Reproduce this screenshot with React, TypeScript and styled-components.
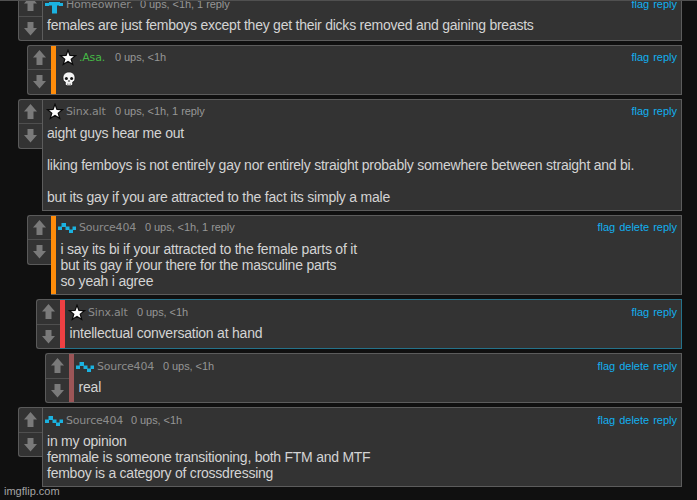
import React from 'react';
import styled, { createGlobalStyle } from 'styled-components';

const Global = createGlobalStyle`
  html, body { margin: 0; background: #101010; overflow: hidden; }
  * { box-sizing: border-box; }
`;

const Page = styled.main`
  position: relative;
  width: 697px;
  height: 500px;
  overflow: hidden;
  background: #101010;
  font-family: "Liberation Sans", Arial, sans-serif;
`;

const TopEdge = styled.div`
  position: absolute;
  top: 0;
  left: 0;
  right: 0;
  height: 1px;
  background: #505050;
`;

const Thread = styled.div`
  display: flex;
  flex-direction: column;
  gap: 4px;
  margin-top: -9px;
  padding: 0 15px 0 18px;
`;

const CommentRow = styled.article<{ $depth: number }>`
  display: flex;
  align-items: flex-start;
  flex: none;
  margin-left: ${p => p.$depth * 9}px;
`;

const VoteBox = styled.div`
  display: flex;
  flex-direction: column;
  flex: none;
  width: 24px;
  height: 50px;
  background: #333;
  border: 1px solid #5a5a5a;
  border-right: 0;
  border-radius: 3px 0 0 3px;
`;

const VoteButton = styled.div<{ $low?: boolean }>`
  display: flex;
  justify-content: center;
  height: ${p => (p.$low ? 24 : 23)}px;
  padding-top: 4px;
  svg { display: block; }
  & + & {
    flex: 1;
    height: auto;
    padding-top: 5px;
    border-top: 1px solid #4f4f4f;
  }
`;

const Card = styled.div<{ $accent?: string; $active?: boolean }>`
  flex: 1;
  min-height: 50px;
  padding: 0 4px 5px 4px;
  background: #333;
  border: 1px solid ${p => (p.$active ? '#25728a' : '#5c5c5c')};
  border-left: ${p => (p.$accent ? '0' : '1px solid #5c5c5c')};
  ${p => p.$accent && `box-shadow: inset 5px 0 ${p.$accent}; padding-left: 9px;`}
`;

const Header = styled.header<{ $low?: boolean }>`
  display: flex;
  align-items: center;
  height: ${p => (p.$low ? 25 : 23)}px;
  margin: 0 0 ${p => (p.$low ? 0 : 2)}px -2px;
`;

const Avatar = styled.span`
  display: block;
  flex: none;
  width: 21px;
  height: 17px;
  svg { display: block; }
`;

const Name = styled.span<{ $green?: boolean; $w: number }>`
  width: ${p => p.$w}px;
  flex: none;
  font: 11px/15px "DejaVu Sans", Verdana, sans-serif;
  letter-spacing: -0.2px;
  color: ${p => (p.$green ? '#45b845' : '#8c8c8c')};
  white-space: nowrap;
`;

const Meta = styled.span`
  margin-left: 9px;
  font-size: 11px;
  line-height: 15px;
  letter-spacing: -0.06px;
  color: #969696;
  white-space: nowrap;
`;

const Links = styled.nav`
  display: flex;
  gap: 4px;
  margin-left: auto;
  font-size: 11px;
  line-height: 15px;
  color: #12b0f0;
`;

const Body = styled.div<{ $inset?: boolean }>`
  padding-left: ${p => (p.$inset ? 0.5 : 0)}px;
  font-size: 14px;
  line-height: 16px;
  color: #d4d4d4;
  white-space: pre;
`;

const Line = styled.div<{ $ls: number }>`
  height: 16px;
  letter-spacing: ${p => p.$ls}px;
`;

const Watermark = styled.div`
  position: absolute;
  left: 4px;
  top: 485px;
  font-size: 11px;
  line-height: 13px;
  color: #a4a4a4;
`;

const Arrow = ({ down }: { down?: boolean }) => (
  <svg width="13" height="15" viewBox="0 0 13 15">
    <path fill="#7a7a7a" d={down ? 'M3.500 0h6v6H13l-6.500 7.500L0 6h3.500z' : 'M6.500 0L13 7.500H9.500V15h-6V7.500H0z'} />
  </svg>
);

type IconKind = 'star' | 'wave' | 'tee';

const UserIcon = ({ kind }: { kind: IconKind }) => (
  <svg width="19" height="18" viewBox="0 0 19 18">
    {kind === 'star' && (
      <path
        d="M10 3l1.500 4.100 4.400.1-3.400 2.700 1.200 4.200L10 11.700l-3.700 2.400 1.200-4.200-3.400-2.700 4.400-.1z"
        fill="#fff" stroke="#0a0a0a" strokeWidth="2.400" paintOrder="stroke"
      />
    )}
    {kind === 'wave' && (
      <path fill="#1bb2e0" d="M0 7.500h4V11H0zM3.500 4h4.500v4H3.500zM7.500 7.500h4V11h-4zM11 10.500h4V14h-4zM14.500 7.500h3.500V11h-3.500z" />
    )}
    {kind === 'tee' && (
      <path fill="#1bb2e0" d="M0 7h4v3H0zM4 6h11v3.500H4zM7 6h5v11.500H7zM14 7h4v3h-4z" />
    )}
  </svg>
);

interface CommentData {
  depth: number;
  accent?: string;
  active?: boolean;
  low?: boolean;
  icon: IconKind;
  name: string;
  nameWidth: number;
  green?: boolean;
  meta: string;
  own?: boolean;
  lines: [string, number][];
  skull?: boolean;
}

const comments: CommentData[] = [
  { depth: 0, low: true, icon: 'tee', name: 'Homeowner.', nameWidth: 65, meta: '0 ups, <1h, 1 reply',
    lines: [['females are just femboys except they get their dicks removed and gaining breasts', -0.24]] },
  { depth: 1, accent: '#ff8c0a', icon: 'star', name: '.Asa.', nameWidth: 27, green: true, meta: '0 ups, <1h', lines: [], skull: true },
  { depth: 0, icon: 'star', name: 'Sinx.alt', nameWidth: 40, meta: '0 ups, <1h, 1 reply',
    lines: [['aight guys hear me out', -0.25], ['', 0],
      ['liking femboys is not entirely gay nor entirely straight probably somewhere between straight and bi.', -0.238], ['', 0],
      ['but its gay if you are attracted to the fact its simply a male', -0.215]] },
  { depth: 1, accent: '#ff8c0a', icon: 'wave', name: 'Source404', nameWidth: 57, meta: '0 ups, <1h, 1 reply', own: true,
    lines: [['i say its bi if your attracted to the female parts of it', -0.21],
      ['but its gay if your there for the masculine parts', -0.23], ['so yeah i agree', -0.2]] },
  { depth: 2, accent: '#ee4043', active: true, low: true, icon: 'star', name: 'Sinx.alt', nameWidth: 40, meta: '0 ups, <1h',
    lines: [['intellectual conversation at hand', -0.22]] },
  { depth: 3, accent: '#9b5557', low: true, icon: 'wave', name: 'Source404', nameWidth: 57, meta: '0 ups, <1h', own: true, lines: [['real', -0.2]] },
  { depth: 0, low: true, icon: 'wave', name: 'Source404', nameWidth: 56, meta: '0 ups, <1h', own: true,
    lines: [['in my opinion', -0.23], ['femmale is someone transitioning, both FTM and MTF', -0.255], ['femboy is a category of crossdressing', -0.24]] },
];

const SkullSvg = styled.svg`
  display: block;
  margin: 0 0 0 1px;
`;

const Skull = () => (
  <SkullSvg width="14" height="16" viewBox="0 0 14 16">
    <path d="M7 1C3.200 1 1 3.600 1 6.800c0 2.200.6 3.600 2.300 4.200v2.300c0 .9 1.300 1.500 3.700 1.500s3.700-.6 3.700-1.500V11C12.400 10.400 13 9 13 6.800 13 3.600 10.800 1 7 1z" fill="#f4f4f4" stroke="#161616" strokeWidth=".7" />
    <circle cx="4.400" cy="7.500" r="1.500" fill="#151515" />
    <circle cx="9.600" cy="7.500" r="1.500" fill="#151515" />
    <path d="M7 9l-.7 1.400h1.400zM5.500 12.500v1.500M7 12.500v1.700M8.500 12.500v1.500" fill="#333" stroke="#555" strokeWidth=".5" />
  </SkullSvg>
);

const Comment = ({ c }: { c: CommentData }) => (
  <CommentRow $depth={c.depth}>
    <VoteBox>
      <VoteButton $low={c.low}><Arrow /></VoteButton>
      <VoteButton><Arrow down /></VoteButton>
    </VoteBox>
    <Card $accent={c.accent} $active={c.active}>
      <Header $low={c.low}>
        <Avatar><UserIcon kind={c.icon} /></Avatar>
        <Name $w={c.nameWidth} $green={c.green}>{c.name}</Name>
        <Meta>{c.meta}</Meta>
        <Links>
          <span>flag</span>
          {c.own && <span>delete</span>}
          <span>reply</span>
        </Links>
      </Header>
      <Body $inset={!!c.accent}>
        {c.skull && <Skull />}
        {c.lines.map(([text, ls], i) => <Line key={i} $ls={ls}>{text}</Line>)}
      </Body>
    </Card>
  </CommentRow>
);

export default function App() {
  return (
    <Page>
      <Global />
      <Thread>
        {comments.map((c, i) => <Comment key={i} c={c} />)}
      </Thread>
      <TopEdge />
      <Watermark>imgflip.com</Watermark>
    </Page>
  );
}
